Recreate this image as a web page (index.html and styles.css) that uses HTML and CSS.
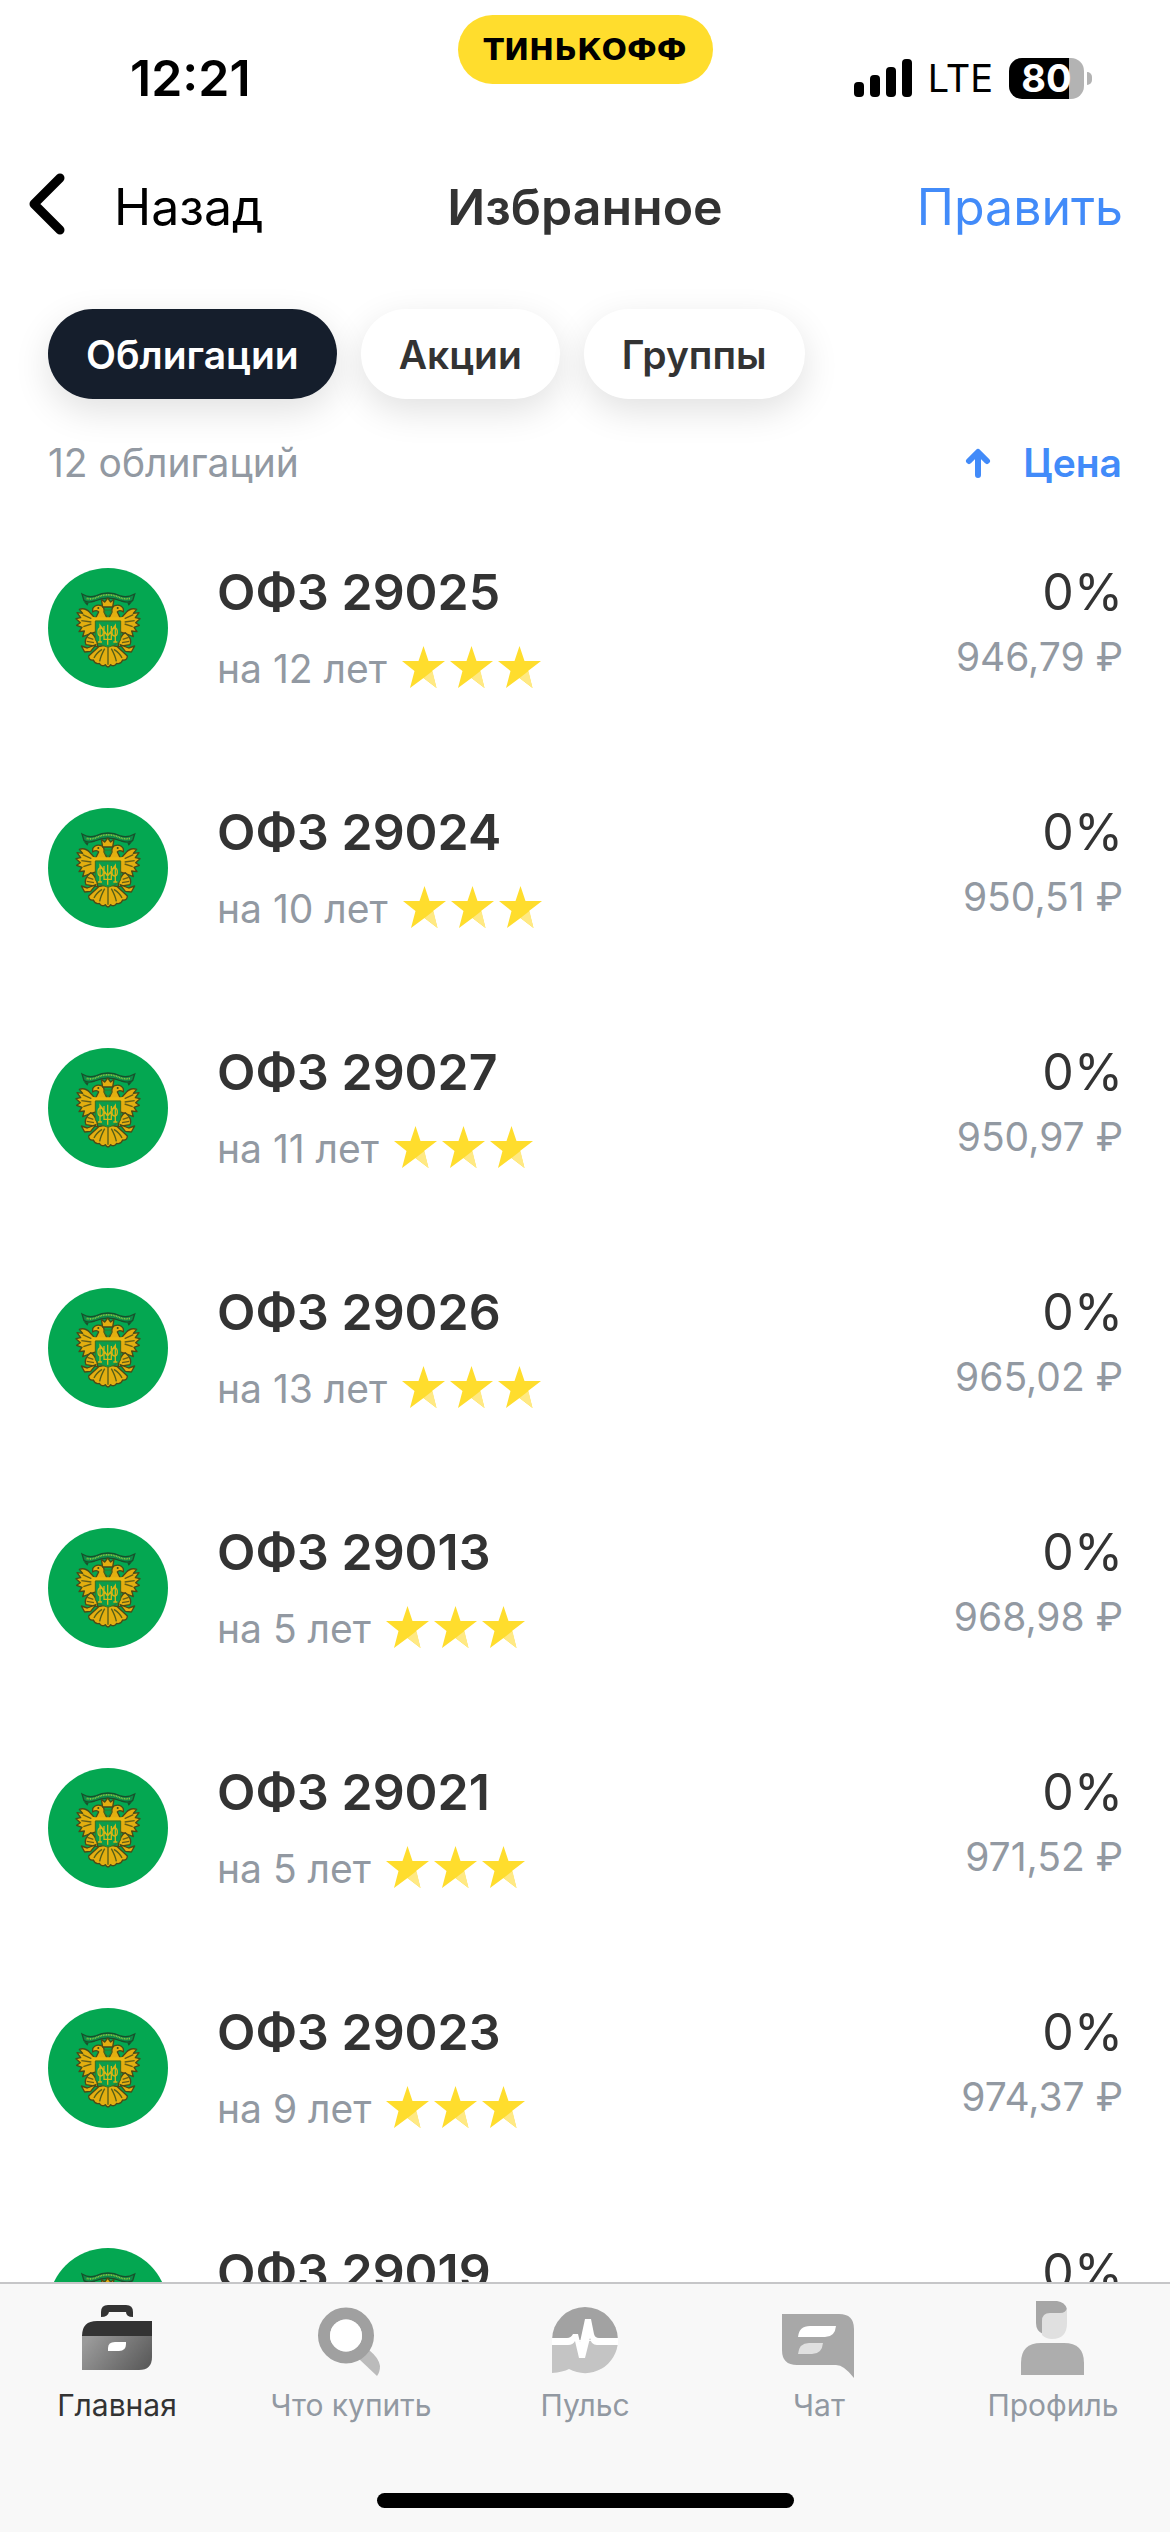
FILE: index.html
```html
<!DOCTYPE html>
<html lang="ru">
<head>
<meta charset="utf-8">
<meta name="viewport" content="width=device-width, initial-scale=1">
<title>Избранное</title>
<link rel="stylesheet" href="styles.css">
</head>
<body>
<svg class="sprite" aria-hidden="true">
  <symbol id="emblem" viewBox="54 54 360 360">
    <circle cx="234" cy="234" r="180" fill="#04a751"/>
    <path d="M156 132 Q176 144 196 138 Q234 120 272 138 Q292 144 314 132 L308 152 Q294 160 274 153 Q234 136 194 153 Q174 160 162 152Z" fill="#0d8a47" stroke="#184f2b" stroke-width="4"/>
    <path d="M170 145 Q186 149 200 142 Q234 127 268 142 Q284 149 300 145" fill="none" stroke="#8cc63f" stroke-width="5" stroke-dasharray="3 2"/>
    <path d="M162 156l14 2-4 9zM306 156l-14 2 4 9z" fill="#184f2b"/>
    <g stroke="#4a4a18" stroke-width="4" stroke-linejoin="round" fill="#e3ae10">
      <path d="M198 208 Q188 196 180 188 Q166 172 148 178 L158 190 L141 188 L152 203 L138 206 L151 218 L140 226 L156 232 L147 245 L163 243 L158 260 L178 252 L198 246Z"/>
      <path d="M270 208 Q280 196 288 188 Q302 172 320 178 L310 190 L327 188 L316 203 L330 206 L317 218 L328 226 L312 232 L321 245 L305 243 L310 260 L290 252 L270 246Z"/>
      <path d="M182 248 Q198 256 204 290 L168 284 Q160 266 182 248ZM286 248 Q270 256 264 290 L300 284 Q308 266 286 248Z"/>
      <path d="M154 288 L172 294 L198 284 L182 304 L164 306ZM314 288 L296 294 L270 284 L286 304 L304 306Z"/>
      <path d="M188 176 Q198 160 216 168 Q224 174 222 186 L232 206 L196 206 L206 186 Q200 178 188 186ZM280 176 Q270 160 252 168 Q244 174 246 186 L236 206 L272 206 L262 186 Q268 178 280 186Z"/>
      <path d="M218 171 L214 148 L224 156 L233 144 L242 156 L252 148 L248 171Z"/>
      <path d="M234 284 L206 290 L176 318 Q176 332 190 330 Q196 344 208 340 Q216 352 226 344 Q234 358 242 344 Q252 352 260 340 Q272 344 278 330 Q292 332 292 318 L262 290Z"/>
    </g>
    <path d="M174 208 Q184 199 196 202 H272 Q286 199 294 208 Q284 215 272 212 H196 Q184 215 174 208Z" fill="#eab80f"/>
    <path d="M196 213 H272 V268 Q268 282 234 292 Q200 282 196 268Z" fill="#0b9d4b" stroke="#3f7021" stroke-width="3"/>
    <path d="M224 180 H244 V190 L234 199 L224 190Z" fill="#0b9d4b" stroke="#3f7021" stroke-width="3"/>
    <g fill="none" stroke="#d8b414" stroke-width="4">
      <path d="M210 276 V226 L233 258 L256 226 V276M233 224 V284M222 228 V268 H244 V228M204 276 H216M250 276 H262"/>
      <ellipse cx="212" cy="246" rx="8" ry="12"/><ellipse cx="254" cy="246" rx="8" ry="12"/>
    </g>
    <path d="M234 292V344M224 296Q212 318 209 334M244 296Q256 318 259 334M216 298Q198 310 192 324M252 298Q270 310 276 324" fill="none" stroke="#566018" stroke-width="4"/>
    <path d="M158 194l26 12M154 212l30 4M160 230l24-8M310 194l-26 12M314 212l-30 4M308 230l-24-8M172 262l18 6M170 274l22 4M296 262l-18 6M298 274l-22 4" stroke="#635f17" stroke-width="4"/>
    <circle cx="205" cy="174" r="3" fill="#34521d"/><circle cx="263" cy="174" r="3" fill="#34521d"/>
  </symbol>
  <symbol id="stars" viewBox="0 0 140 42">
    <g id="star">
      <path d="M21.500 0 L26.500 15 H43 L30 25 L34.500 42 L21.500 32 L8 42 L12.500 25 L0 15 H16.500Z" fill="#ffdd2d"/>
      <path d="M34.500 42 L21.500 32 L30.500 25Z" fill="#ffe984"/>
    </g>
    <use href="#star" x="48"/>
    <use href="#star" x="96"/>
  </symbol>
</svg>

<div class="status">
  <time class="status-time">12:21</time>
  <span class="brand">ТИНЬКОФФ</span>
  <div class="status-right">
    <svg class="signal" viewBox="0 0 58 38" aria-hidden="true"><rect y="23" width="10" height="15" rx="4"/><rect x="16" y="16" width="10" height="22" rx="4"/><rect x="32" y="8" width="10" height="30" rx="4"/><rect x="48" width="10" height="38" rx="4"/></svg>
    <span class="network">LTE</span>
    <span class="battery"><span class="battery-level">80</span></span>
  </div>
</div>

<header class="header">
  <button class="back" type="button">
    <svg class="back-icon" viewBox="0 0 36 62" aria-hidden="true"><path d="M31 5 L5 31 L31 57" fill="none" stroke="#000" stroke-width="9" stroke-linecap="round" stroke-linejoin="round"/></svg>
    Назад
  </button>
  <h1 class="title">Избранное</h1>
  <button class="edit" type="button">Править</button>
</header>

<div class="filters">
  <button class="chip chip-active" type="button">Облигации</button>
  <button class="chip" type="button">Акции</button>
  <button class="chip" type="button">Группы</button>
</div>

<div class="summary">
  <span class="count">12 облигаций</span>
  <button class="sort" type="button">
    <svg class="sort-icon" viewBox="0 0 26 30" aria-hidden="true"><path d="M13 27 V5 M4 13 L13 4 L22 13" fill="none" stroke="#428bf9" stroke-width="6" stroke-linecap="round" stroke-linejoin="round"/></svg>
    Цена
  </button>
</div>

<main class="list">
  <a class="bond" href="#29025"><svg class="logo" aria-hidden="true"><use href="#emblem"/></svg><span class="info"><span class="name">ОФЗ 29025</span><span class="term">на 12 лет <svg class="stars" aria-hidden="true"><use href="#stars"/></svg></span></span><span class="quote"><span class="change">0%</span><span class="price">946,79 ₽</span></span></a>
  <a class="bond" href="#29024"><svg class="logo" aria-hidden="true"><use href="#emblem"/></svg><span class="info"><span class="name">ОФЗ 29024</span><span class="term">на 10 лет <svg class="stars" aria-hidden="true"><use href="#stars"/></svg></span></span><span class="quote"><span class="change">0%</span><span class="price">950,51 ₽</span></span></a>
  <a class="bond" href="#29027"><svg class="logo" aria-hidden="true"><use href="#emblem"/></svg><span class="info"><span class="name">ОФЗ 29027</span><span class="term">на 11 лет <svg class="stars" aria-hidden="true"><use href="#stars"/></svg></span></span><span class="quote"><span class="change">0%</span><span class="price">950,97 ₽</span></span></a>
  <a class="bond" href="#29026"><svg class="logo" aria-hidden="true"><use href="#emblem"/></svg><span class="info"><span class="name">ОФЗ 29026</span><span class="term">на 13 лет <svg class="stars" aria-hidden="true"><use href="#stars"/></svg></span></span><span class="quote"><span class="change">0%</span><span class="price">965,02 ₽</span></span></a>
  <a class="bond" href="#29013"><svg class="logo" aria-hidden="true"><use href="#emblem"/></svg><span class="info"><span class="name">ОФЗ 29013</span><span class="term">на 5 лет <svg class="stars" aria-hidden="true"><use href="#stars"/></svg></span></span><span class="quote"><span class="change">0%</span><span class="price">968,98 ₽</span></span></a>
  <a class="bond" href="#29021"><svg class="logo" aria-hidden="true"><use href="#emblem"/></svg><span class="info"><span class="name">ОФЗ 29021</span><span class="term">на 5 лет <svg class="stars" aria-hidden="true"><use href="#stars"/></svg></span></span><span class="quote"><span class="change">0%</span><span class="price">971,52 ₽</span></span></a>
  <a class="bond" href="#29023"><svg class="logo" aria-hidden="true"><use href="#emblem"/></svg><span class="info"><span class="name">ОФЗ 29023</span><span class="term">на 9 лет <svg class="stars" aria-hidden="true"><use href="#stars"/></svg></span></span><span class="quote"><span class="change">0%</span><span class="price">974,37 ₽</span></span></a>
  <a class="bond" href="#29019"><svg class="logo" aria-hidden="true"><use href="#emblem"/></svg><span class="info"><span class="name">ОФЗ 29019</span></span><span class="quote"><span class="change">0%</span></span></a>
</main>

<footer class="footer">
  <nav class="tabs">
    <a class="tab tab-active" href="#home">
      <svg class="tab-icon" viewBox="0 0 96 84" aria-hidden="true">
        <defs><linearGradient id="case" x1="0" y1="0.300" x2="1" y2="0.700"><stop offset="0" stop-color="#9a9a9a"/><stop offset="1" stop-color="#5c5c5c"/></linearGradient></defs>
        <path d="M32 17 V12 Q32 5 39 5 H57 Q64 5 64 12 V17 Q57 17 57 12 H40 Q39 17 32 17Z" fill="#333"/>
        <path d="M13 36 Q13 21 28 21 H83 V36Z" fill="#333"/>
        <path d="M13 36 H83 V57 Q83 70 70 70 H13Z" fill="url(#case)"/>
        <path d="M39 51 V48 Q39 42 46 42 H57 V44 Q57 51 50 51Z" fill="#fff"/>
      </svg>
      Главная
    </a>
    <a class="tab" href="#search">
      <svg class="tab-icon" viewBox="0 0 96 84" aria-hidden="true">
        <path d="M66 50 Q76 58 77 66 Q77 72 74 76 L56 59Z" fill="#bbb"/>
        <circle cx="43" cy="35.500" r="22" fill="none" stroke="#a0a0a0" stroke-width="12"/><circle cx="43" cy="35.500" r="16" fill="#fff"/>
      </svg>
      Что купить
    </a>
    <a class="tab" href="#pulse">
      <svg class="tab-icon" viewBox="0 0 96 84" aria-hidden="true">
        <path d="M15 40 A33 33 0 0 1 81 40Z" fill="#a2a2a2"/>
        <path d="M15 41 H81 A33 33 0 0 1 32 69 Q26 72 15 73Z" fill="#c4c4c4"/>
        <path d="M15 38 H30 Q34 38 36 34 H41 L43 42 L48 19 H54 L57 34 Q58 38 62 38 H81 V45 H60 Q54 45 53 38 L48 58 H42 L38 41 Q36 45 31 45 H15Z" fill="#fff"/>
      </svg>
      Пульс
    </a>
    <a class="tab" href="#chat">
      <svg class="tab-icon" viewBox="0 0 96 84" aria-hidden="true">
        <path d="M11 14 H68 Q83 14 83 29 V78 Q73 65 65 65 H26 Q11 65 11 50Z" fill="#a8a8a8"/>
        <path d="M27 37 Q28 26 39 26 H65 Q64 37 54 37Z" fill="#fff"/>
        <path d="M27 54 Q28 43 38 43 H52 Q51 54 41 54Z" fill="#e0e0e0"/>
      </svg>
      Чат
    </a>
    <a class="tab" href="#profile">
      <svg class="tab-icon" viewBox="0 0 96 84" aria-hidden="true">
        <path d="M31 1 H52 Q60 2 62 9 Q62 14 56 14 L38 34 Q31 31 31 23Z" fill="#a6a6a6"/>
        <path d="M37 35 V21 Q37 13 45 13 H55 Q61 13 62 8 V23 Q62 39 47 39 Q41 39 37 35Z" fill="#e0e0e0"/>
        <path d="M16 75 V63 Q16 43 36 43 H59 Q79 43 79 63 V75Z" fill="#adadad"/>
      </svg>
      Профиль
    </a>
  </nav>
  <div class="home-bar"></div>
</footer>
</body>
</html>
```

FILE: styles.css
```css
* {
  box-sizing: border-box;
}

body {
  margin: 0;
  height: 100vh;
  display: flex;
  flex-direction: column;
  overflow: hidden;
  background: #fff;
  color: #333;
  font-family: Inter, "Liberation Sans", sans-serif;
}

button {
  border: 0;
  padding: 0;
  background: none;
  color: inherit;
  font: inherit;
}

a {
  color: inherit;
  text-decoration: none;
}

.sprite {
  position: absolute;
  width: 0;
  height: 0;
}

/* Status bar */
.status {
  display: grid;
  grid-template-columns: 1fr auto 1fr;
  align-items: start;
  height: 156px;
  padding: 15px 78px 0 130px;
  color: #000;
}

.status-time {
  padding-top: 33px;
  font-size: 50px;
  line-height: 60px;
  font-weight: 600;
}

.brand {
  display: flex;
  align-items: center;
  justify-content: center;
  width: 255px;
  height: 69px;
  margin-right: 52px;
  border-radius: 35px;
  background: #ffdd2d;
  font-family: "DejaVu Sans", sans-serif;
  font-size: 30px;
  font-weight: 700;
}

.status-right {
  display: flex;
  align-items: center;
  justify-content: flex-end;
  gap: 16px;
  padding-top: 42px;
}

.signal {
  width: 58px;
  height: 38px;
}

.network {
  font-size: 38px;
  line-height: 42px;
}

.battery {
  position: relative;
  width: 75px;
  height: 41px;
  margin-right: 8px;
  border-radius: 13px;
  background: linear-gradient(90deg, #000 80%, #b3b3b3 80%);
  color: #fff;
  text-align: center;
}

.battery::after {
  content: "";
  position: absolute;
  left: 78px;
  top: 14px;
  width: 5px;
  height: 13px;
  border-radius: 0 6px 6px 0;
  background: #b3b3b3;
}

.battery-level {
  font-size: 38px;
  line-height: 41px;
  font-weight: 700;
}

/* Header */
.header {
  display: grid;
  grid-template-columns: 1fr auto 1fr;
  align-items: center;
  height: 102px;
  padding: 0 29px;
  font-size: 50px;
  line-height: 60px;
}

.back {
  display: flex;
  align-items: center;
  gap: 49px;
  margin-right: auto;
  color: #000;
}

.back-icon {
  width: 36px;
  height: 62px;
  margin-bottom: 6px;
}

.title {
  margin: 0;
  font-size: 50px;
  font-weight: 600;
}

.edit {
  margin-left: auto;
  margin-right: 18px;
  color: #428bf9;
}

/* Filters */
.filters {
  display: flex;
  gap: 24px;
  padding: 51px 48px 0;
}

.chip {
  height: 90px;
  padding: 0 38px;
  border-radius: 45px;
  background: #fff;
  box-shadow: 0 12px 36px rgba(0, 0, 0, 0.12);
  font-size: 39px;
  font-weight: 600;
}

.chip-active {
  background: #151e2c;
  color: #fff;
}

.summary {
  display: flex;
  justify-content: space-between;
  align-items: center;
  padding: 40px 48px 0;
  font-size: 39px;
  line-height: 48px;
}

.count {
  color: #9299a2;
}

.sort {
  display: flex;
  align-items: center;
  gap: 32px;
  color: #428bf9;
  font-weight: 600;
}

.sort-icon {
  width: 26px;
  height: 30px;
}

/* Bonds */
.list {
  flex: 1;
  min-height: 0;
  overflow: hidden;
  padding-top: 21px;
}

.bond {
  display: flex;
  height: 240px;
  padding: 60px 47px 0 48px;
}

.logo {
  width: 120px;
  height: 120px;
  flex: none;
}

.info,
.quote {
  display: flex;
  flex-direction: column;
}

.info {
  flex: 1;
  gap: 23px;
  padding-left: 49px;
}

.quote {
  gap: 11px;
  align-items: flex-end;
}

.name,
.change {
  margin-top: -6px;
  font-size: 50px;
  line-height: 60px;
}

.name {
  font-weight: 600;
}

.term,
.price {
  color: #9299a2;
  font-size: 39px;
  line-height: 48px;
}

.term {
  display: flex;
  align-items: center;
  gap: 15px;
}

.stars {
  width: 140px;
  height: 42px;
  margin-bottom: 4px;
}

/* Bottom navigation */
.footer {
  flex: none;
  border-top: 2px solid #c6c6c8;
  background: #f8f8f8;
}

.tabs {
  display: grid;
  grid-template-columns: repeat(5, 1fr);
  padding-top: 16px;
}

.tab {
  display: flex;
  flex-direction: column;
  align-items: center;
  color: #9299a2;
  font-size: 30px;
  line-height: 42px;
}

.tab-active {
  color: #333;
}

.tab-icon {
  width: 96px;
  height: 84px;
}

.home-bar {
  width: 417px;
  height: 15px;
  margin: 67px auto 24px;
  border-radius: 8px;
  background: #000;
}
```
